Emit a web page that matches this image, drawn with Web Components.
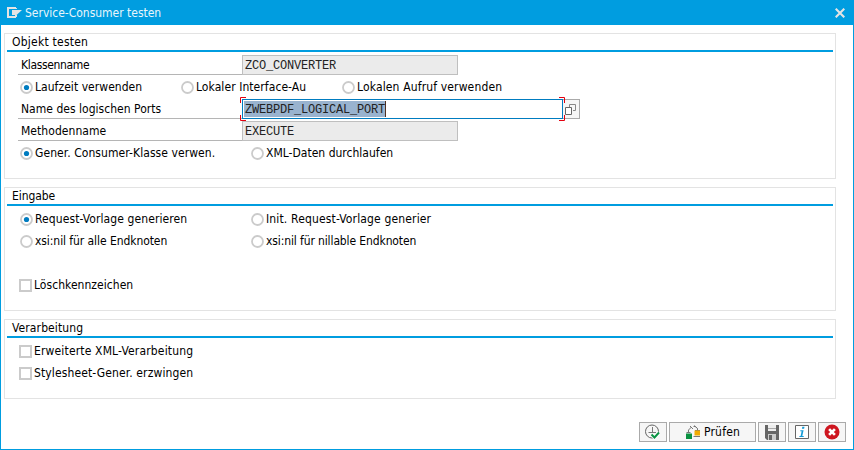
<!DOCTYPE html>
<html lang="de"><head><meta charset="utf-8"><title>Service-Consumer testen</title>
<style>
body{margin:0;width:854px;height:450px;overflow:hidden;font:12px/20px "DejaVu Sans Condensed","DejaVu Sans",sans-serif;font-stretch:condensed;color:#000}
</style></head><body>
<sap-dialog>
 <fit-text slot="title" w="136">Service-Consumer testen</fit-text>
 <group-box style="height:146px"><fit-text slot="head" w="76">Objekt testen</fit-text>
  <form-row label="Klassenname" w="68"><text-field value="ZCO_CONVERTER" readonly></text-field></form-row>
  <option-row><radio-item checked label="Laufzeit verwenden" w="107" style="width:161px"></radio-item><radio-item label="Lokaler Interface-Au" w="110" style="width:161px"></radio-item><radio-item label="Lokalen Aufruf verwenden" w="145"></radio-item></option-row>
  <form-row label="Name des logischen Ports" w="140"><text-field value="ZWEBPDF_LOGICAL_PORT" active></text-field></form-row>
  <form-row label="Methodenname" w="85"><text-field value="EXECUTE" readonly></text-field></form-row>
  <option-row><radio-item checked label="Gener. Consumer-Klasse verwen." w="180" style="width:231px"></radio-item><radio-item label="XML-Daten durchlaufen" w="127"></radio-item></option-row>
 </group-box>
 <group-box style="height:124px"><fit-text slot="head" w="43">Eingabe</fit-text>
  <option-row><radio-item checked label="Request-Vorlage generieren" w="152" style="width:231px"></radio-item><radio-item label="Init. Request-Vorlage generier" w="165"></radio-item></option-row>
  <option-row><radio-item label="xsi:nil für alle Endknoten" w="132" style="width:231px"></radio-item><radio-item label="xsi:nil für nillable Endknoten" w="150"></radio-item></option-row>
  <option-row></option-row>
  <option-row><check-item label="Löschkennzeichen" w="99"></check-item></option-row>
 </group-box>
 <group-box style="height:80px"><fit-text slot="head" w="71">Verarbeitung</fit-text>
  <option-row><check-item label="Erweiterte XML-Verarbeitung" w="159"></check-item></option-row>
  <option-row><check-item label="Stylesheet-Gener. erzwingen" w="159"></check-item></option-row>
 </group-box>
 <tool-button slot="actions"><svg width="18" height="16" viewBox="0 0 18 16" fill="none"><circle cx="8" cy="7.5" r="6.5" stroke="#666" stroke-width="1"/><path d="M8.5 3V9M4.5 8.5H12" stroke="#777"/><path d="M7.5 10.5l3 3 4.5-5" stroke="#fff" stroke-width="3.4"/><path d="M7.5 10.5l3 3 4.5-5" stroke="#0b9444" stroke-width="2"/></svg></tool-button>
 <tool-button slot="actions" style="width:87px"><svg width="16" height="16" viewBox="0 0 16 16"><path d="M3.5 9V6L6.5 3M5 2l3 3M9 1.5l3.5 3M8.5 2.5h2l2 2V8" fill="none" stroke="#777"/><path d="M1.5 8.5h4" stroke="#777"/><path d="M10 6.5h5" stroke="#777"/><path d="M1 9.5h6V15H1z" fill="#0a9140"/><path d="M9.5 6.5H15V11.5H9.5z" fill="#f0ab00"/><path d="M8.5 12.5H15" stroke="#777"/></svg><fit-text w="36">Prüfen</fit-text></tool-button>
 <tool-button slot="actions"><svg width="16" height="16" viewBox="0 0 16 16"><path d="M1 1h14v15H3l-2-2z" fill="#666"/><path d="M4 1h8v6H4z" fill="#eee"/><path d="M4 4.5h8" stroke="#aaa"/><path d="M4 10h8v6H4z" fill="#ccc"/><path d="M5 11h3v5H5z" fill="#666"/></svg></tool-button>
 <tool-button slot="actions"><svg width="16" height="16" viewBox="0 0 16 16"><path d="M1.5 1.5h13v13h-13z" fill="#fff" stroke="#666"/><path d="M8.3 2.7h2.2l-.4 2H7.9zM6.4 6.2h3.2L8.3 12h1.4v1H5.4v-1h1.2l1-4.8H6.2z" fill="#159bd7"/></svg></tool-button>
 <tool-button slot="actions"><svg width="16" height="16" viewBox="0 0 16 16"><circle cx="8" cy="8" r="7.5" fill="#ce1620"/><path d="M5.1 5.1l5.8 5.8M10.9 5.1l-5.8 5.8" stroke="#fff" stroke-width="2.7"/></svg></tool-button>
</sap-dialog>
<script>
function define(name, html, setup){
  customElements.define(name, class extends HTMLElement{
    connectedCallback(){
      if(this.shadowRoot) return;
      const t=document.createElement('template');
      t.innerHTML=typeof html==='function'?html(this):html;
      this.attachShadow({mode:'open'}).append(t.content.cloneNode(true));
      if(setup) setup(this);
    }
  });
}
// Spreads the letters so that the text takes the width given in w.
define('fit-text','<style>:host{display:block;white-space:pre}span{display:inline-block}</style><span><slot></slot></span>',el=>{
  const s=el.shadowRoot.querySelector('span');
  s.style.letterSpacing=(+el.getAttribute('w')+.2-s.getBoundingClientRect().width)/el.textContent.length+'px';
});
define('sap-dialog',`<style>
:host{display:flex;flex-direction:column;box-sizing:border-box;width:854px;height:450px;border:1px solid #009de0;border-top:0;background:#fff}
header{height:25px;flex:none;background:#009de0;color:#e9f5fb;display:flex;align-items:center;padding:0 8px 0 6px;box-sizing:border-box}
header .icon{margin-right:3px}.x{margin-left:auto}
main{display:flex;flex-direction:column;gap:8px;padding:8px 17px 0 3px}
footer{display:flex;gap:2px;justify-content:flex-end;margin-top:auto;padding:0 7px 7px}
</style><header><svg class="icon" width="15" height="12" viewBox="0 0 15 12"><path d="M9 1H1v9h8M9 1v1M9 8v2" fill="none" stroke="#e4e4e4" stroke-width="2"/><path d="M5 3h10L9.5 8H5z" fill="#e4e4e4"/></svg><slot name="title"></slot>
<svg class="x" width="10" height="10" viewBox="0 0 10 10"><path d="M.7.7l8.6 8.6M9.3.7L.7 9.3" stroke="#e4e4e4" stroke-width="2.1"/></svg></header><main><slot></slot></main><footer><slot name="actions"></slot></footer>`);
define('group-box',`<style>:host{display:block;box-sizing:border-box;border:1px solid #e3e3e3;padding:0 2px}
.h{height:16px;line-height:17px;padding-left:5px;border-bottom:2px solid #009de0}.b{padding:2px 0 0 11px}</style><div class="h"><slot name="head"></slot></div><div class="b"><slot></slot></div>`);
define('option-row','<style>:host{display:flex;height:22px;align-items:center}</style><slot></slot>');
define('form-row',e=>`<style>:host{display:flex;height:22px;box-sizing:border-box;padding-top:1px}
.l{width:224px;box-sizing:border-box;height:20px;line-height:21px;padding-left:3px;border-bottom:1px solid #b5b5b5}</style><div class="l"><fit-text w="${e.getAttribute('w')}">${e.getAttribute('label')}</fit-text></div><slot></slot>`);
define('radio-item',e=>`<style>:host{display:flex;height:22px;align-items:center;padding-left:2px;box-sizing:border-box}svg{margin-right:2px}</style>
<svg width="13" height="13" viewBox="0 0 13 13"><circle cx="6.5" cy="6.5" r="5.5" fill="#fff" stroke="#cbcbcb" stroke-width="1.8"/>${e.hasAttribute('checked')?'<circle cx="6.5" cy="6.5" r="2.6" fill="#007cc0"/>':''}</svg><fit-text w="${e.getAttribute('w')}">${e.getAttribute('label')}</fit-text>`);
define('check-item',e=>`<style>:host{display:flex;height:22px;align-items:center;padding-left:1px}i{width:9px;height:9px;border:2px solid #cbcbcb;margin-right:2px}</style><i></i><fit-text w="${e.getAttribute('w')}">${e.getAttribute('label')}</fit-text>`);
define('text-field',e=>`<style>
:host{display:flex;position:relative;height:20px;font:12px/19px "Courier New","Liberation Mono",monospace;letter-spacing:-.2px;color:#222}
.f{box-sizing:border-box;width:216px;height:20px;border:1px solid #bfbfbf;background:#ebebeb;padding:1px 0 0 2px;white-space:pre}
:host([active]) .f{width:321px;background:#fff;border-color:#007cc0;padding:1px 0 0 1px}
.s{display:inline-block;height:16px;line-height:19px;background:#99b3cf;width:140px;padding-left:1px;border-right:1px solid #503020;box-sizing:content-box;vertical-align:top}
.c{position:absolute;left:-2px;top:-2px}
.m{box-sizing:border-box;width:17px;height:20px;border:1px solid #aaa;border-left:0;background:#f6f6f6;padding:3px 0 0 1px;line-height:0}
</style><div class="f">${e.hasAttribute('active')?`<span class="s">${e.getAttribute('value')}</span>`:e.getAttribute('value')}</div>${e.hasAttribute('active')?`<div class="m"><svg width="13" height="14" viewBox="0 0 13 14"><path d="M5.5 4V1.5h6v6H9" fill="none" stroke="#888"/><path d="M1.5 4.5h6v7h-6z" fill="#fff" stroke="#666"/></svg></div><svg class="c" width="325" height="24" viewBox="0 0 325 24"><path d="M6 .5H.5V6M319 .5h5.5V6M6 23.5H.5V18M319 23.5h5.5V18" fill="none" stroke="#e3000f"/></svg>`:''}`);
define('tool-button',`<style>:host{display:flex;align-items:center;justify-content:center;box-sizing:border-box;width:28px;height:20px;border:1px solid #aaa;background:#f6f6f6;gap:3px}</style><slot></slot>`);
</script>
</body></html>
